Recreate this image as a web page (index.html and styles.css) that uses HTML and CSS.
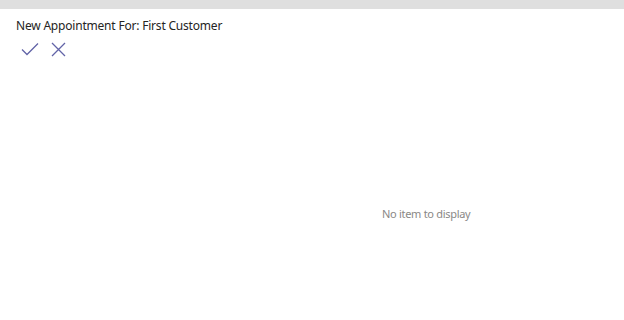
FILE: index.html
```html
<!DOCTYPE html>
<html lang="en">
<head>
  <meta charset="UTF-8">
  <title>New Appointment</title>
  <link rel="stylesheet" href="styles.css">
</head>
<body>
  <div class="topbar"></div>
  <div class="page">
    <h1 class="title">New Appointment For: First Customer</h1>
    <div class="actions">
      <button class="icon-btn" title="Save">
        <svg width="18" height="14" viewBox="0 0 18 14"><path d="M1 7.5 L6 12.5 L17 1.5" fill="none" stroke="#6264a7" stroke-width="1.3"/></svg>
      </button>
      <button class="icon-btn" title="Cancel">
        <svg width="15" height="15" viewBox="0 0 15 15"><path d="M1 1 L14 14 M14 1 L1 14" fill="none" stroke="#6264a7" stroke-width="1.3"/></svg>
      </button>
    </div>
    <div class="empty">No item to display</div>
  </div>
</body>
</html>
```

FILE: styles.css
```css
body {
  margin: 0;
  font-family: "Noto Sans", "Open Sans", sans-serif;
  background: #fff;
  color: #252423;
}
.topbar {
  height: 9px;
  background: #dfdfdf;
}
.page {
  padding: 7px 16px 0 16px;
}
.title {
  margin: 0;
  font-size: 12px;
  letter-spacing: -0.2px;
  font-weight: 400;
  line-height: 20px;
}
.actions {
  display: flex;
  gap: 12px;
  margin-top: 5px;
  padding-left: 5px;
}
.icon-btn {
  border: none;
  background: none;
  padding: 0;
  display: flex;
  align-items: center;
  height: 16px;
}
.empty {
  margin-top: 149px;
  margin-left: 366px;
  font-size: 11px;
  letter-spacing: -0.3px;
  color: #8a8886;
}
```
